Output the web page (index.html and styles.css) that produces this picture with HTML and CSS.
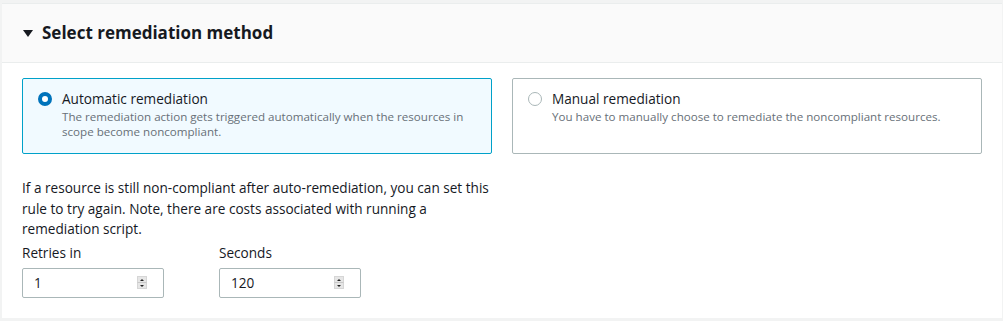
FILE: index.html
```html
<!DOCTYPE html>
<html lang="en">
<head>
  <meta charset="UTF-8">
  <meta name="viewport" content="width=device-width, initial-scale=1.0">
  <title>Select remediation method</title>
  <link rel="stylesheet" href="styles.css">
</head>
<body>

<div class="panel">
  <div class="panel-header">
    <span class="caret"></span>
    <h2>Select remediation method</h2>
  </div>

  <div class="panel-body">
    <div class="tiles">
      <div class="tile tile-selected">
        <span class="radio radio-checked"></span>
        <div class="tile-text">
          <div class="tile-label">Automatic remediation</div>
          <div class="tile-desc">The remediation action gets triggered automatically when the resources in scope become noncompliant.</div>
        </div>
      </div>
      <div class="tile">
        <span class="radio"></span>
        <div class="tile-text">
          <div class="tile-label">Manual remediation</div>
          <div class="tile-desc">You have to manually choose to remediate the noncompliant resources.</div>
        </div>
      </div>
    </div>

    <p class="retry-note">If a resource is still non-compliant after auto-remediation, you can set this rule to try again. Note, there are costs associated with running a remediation script.</p>

    <div class="retry-fields">
      <div class="field">
        <div class="field-label">Retries in</div>
        <div class="number-input">
          <span class="number-value">1</span>
          <span class="spinner"><span class="spin-up"></span><span class="spin-down"></span></span>
        </div>
      </div>
      <div class="field">
        <div class="field-label">Seconds</div>
        <div class="number-input">
          <span class="number-value">120</span>
          <span class="spinner"><span class="spin-up"></span><span class="spin-down"></span></span>
        </div>
      </div>
    </div>
  </div>
</div>

</body>
</html>
```

FILE: styles.css
```css
body {
  font-family: 'Open Sans', 'Noto Sans', sans-serif;
  margin: 3px 1px 0 2px;
  background-color: #f2f3f3;
  color: #16191f;
}

.panel {
  background-color: #fff;
  border-top: 1px solid #eaeded;
  box-shadow: 0 1px 1px 0 rgba(0, 28, 36, 0.3), 1px 1px 1px 0 rgba(0, 28, 36, 0.15), -1px 1px 1px 0 rgba(0, 28, 36, 0.15);
}

.panel-header {
  display: flex;
  align-items: center;
  height: 58px;
  padding: 0 20px 0 21px;
  background-color: #fafafa;
  border-bottom: 1px solid #eaeded;
}

.caret {
  width: 0;
  height: 0;
  border-left: 5px solid transparent;
  border-right: 5px solid transparent;
  border-top: 7px solid #16191f;
  margin-right: 9px;
}

.panel-header h2 {
  margin: 0 0 1px;
  font-size: 17px;
  font-weight: 700;
}

.panel-body {
  padding: 15px 20px 20px;
}

/* Remediation tiles */
.tiles {
  display: grid;
  grid-template-columns: 1fr 1fr;
  gap: 20px;
}

.tile {
  display: flex;
  align-items: flex-start;
  padding: 10px 16px 14px 15px;
  border: 1px solid #aab7b8;
  border-radius: 2px;
}

.tile-selected {
  background-color: #f1faff;
  border-color: #00a1c9;
}

.radio {
  flex: none;
  box-sizing: border-box;
  width: 14px;
  height: 14px;
  margin-top: 3px;
  margin-right: 10px;
  border: 1px solid #aab7b8;
  border-radius: 50%;
  background-color: #fff;
}

.radio-checked {
  border: 4px solid #0073bb;
}

.tile-label {
  font-size: 13.6px;
  line-height: 20px;
}

.tile-desc {
  font-size: 11.6px;
  line-height: 15px;
  color: #687078;
}

/* Retry settings */
.retry-note {
  max-width: 472px;
  margin: 24px 0 3px;
  font-size: 13.6px;
  line-height: 20.5px;
}

.retry-fields {
  display: flex;
  gap: 55px;
}

.field-label {
  font-size: 13.6px;
  line-height: 20px;
  margin-bottom: 5px;
}

.number-input {
  display: flex;
  align-items: center;
  justify-content: space-between;
  box-sizing: border-box;
  width: 142px;
  height: 30px;
  padding: 0 16px 0 11px;
  border: 1px solid #aab7b8;
  border-radius: 2px;
  font-size: 13.6px;
}

.spinner {
  display: flex;
  flex-direction: column;
  width: 10px;
  height: 13px;
}

.spin-up,
.spin-down {
  flex: 1;
  display: flex;
  align-items: center;
  justify-content: center;
  background-color: #e6e6e6;
  border: 1px solid #d6d6d6;
}

.spin-up {
  border-bottom-color: #c8c8c8;
}

.spin-down {
  border-top: none;
}

.spin-up::after {
  content: '';
  border-left: 2px solid transparent;
  border-right: 2px solid transparent;
  border-bottom: 2px solid #222;
}

.spin-down::after {
  content: '';
  border-left: 2px solid transparent;
  border-right: 2px solid transparent;
  border-top: 2px solid #222;
}
```
